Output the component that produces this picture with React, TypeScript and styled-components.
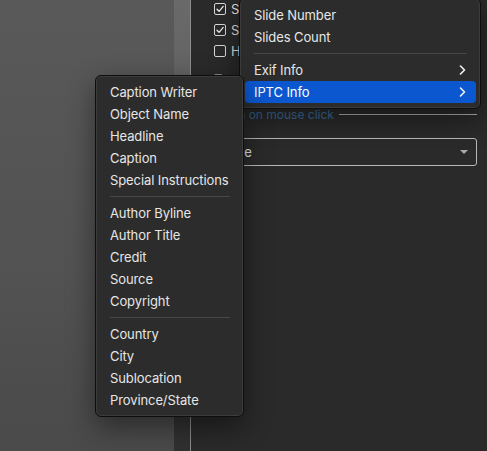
import styled, { createGlobalStyle } from "styled-components";

const GlobalStyle = createGlobalStyle`
  html, body {
    margin: 0;
    padding: 0;
    background: #2a2a2a;
    overflow: hidden;
  }
  body {
    font-family: Inter, "Liberation Sans", sans-serif;
    -webkit-font-smoothing: antialiased;
  }
`;

const Screen = styled.div`
  position: relative;
  display: flex;
  width: 487px;
  height: 451px;
  overflow: hidden;
`;

const Backdrop = styled.div`
  width: 174px;
  background: linear-gradient(180deg, #595959 0%, #525252 60%, #4a4a4a 100%);
`;

const Gutter = styled.div`
  width: 16px;
  background: linear-gradient(180deg, #6a6a6a 0%, #5a5a5a 35%, #3a3a3a 75%, #303030 100%);
`;

const Panel = styled.div`
  flex: 1;
  display: flex;
  flex-direction: column;
  background: #2a2a2a;
  border-left: 1px solid #8c8c8c;
  padding: 0 10px 0 23px;
  color: #dedede;
  font-size: 13px;
`;

const CheckRow = styled.div`
  display: flex;
  align-items: center;
  gap: 5px;
  height: 21px;
  &:first-child {
    margin-top: -2px;
  }
`;

const Box = styled.span`
  box-sizing: border-box;
  width: 12px;
  height: 12px;
  border: 1px solid #d8d8d8;
  border-radius: 2px;
  display: flex;
  align-items: center;
  justify-content: center;
`;

const FieldLabel = styled.div`
  margin-top: 8px;
  height: 20px;
  line-height: 20px;
  color: #8a8a8a;
`;

const LinkRow = styled.div`
  display: flex;
  align-items: center;
  gap: 5px;
  margin-top: 16px;
  margin-left: -5px;
  height: 18px;
`;

const LinkText = styled.span`
  color: #3d6c9b;
  font-size: 12px;
  white-space: nowrap;
`;

const Rule = styled.div`
  flex: 1;
  height: 1px;
  background: #b0b0b0;
`;

const Select = styled.div`
  box-sizing: border-box;
  margin-top: 15px;
  height: 28px;
  border: 1px solid #b8b8b8;
  border-radius: 3px;
  display: flex;
  align-items: center;
  justify-content: space-between;
  padding: 0 8px 0 4px;
  color: #e0e0e0;
`;

const Caret = styled.span`
  width: 0;
  height: 0;
  border-left: 4px solid transparent;
  border-right: 4px solid transparent;
  border-top: 4px solid #a8a8a8;
`;

const Menu = styled.div<{ $left: number; $top: number; $width: number }>`
  position: absolute;
  left: ${(p) => p.$left}px;
  top: ${(p) => p.$top}px;
  width: ${(p) => p.$width}px;
  box-sizing: border-box;
  padding: 5px 0;
  background: #2c2c2c;
  border: 1px solid #0e0e0e;
  border-radius: 6px;
  box-shadow: inset 0 0 0 1px #3c3c3c, 0 10px 28px rgba(0, 0, 0, 0.45);
  color: #e6e6e6;
  font-size: 13px;
  letter-spacing: -0.1px;
`;

const Item = styled.div<{ $active?: boolean }>`
  display: flex;
  align-items: center;
  justify-content: space-between;
  height: 22px;
  margin: 0 4px 0 5px;
  padding: 0 10px 0 9px;
  border-radius: 4px;
  background: ${(p) => (p.$active ? "#0b57d0" : "transparent")};
  color: ${(p) => (p.$active ? "#ffffff" : "#e6e6e6")};
  white-space: nowrap;
`;

const Separator = styled.div`
  height: 1px;
  margin: 5px 13px 5px 14px;
  background: #474747;
`;

const Chevron = () => (
  <svg width="7" height="10" viewBox="0 0 7 10">
    <path d="M1.5 1 L5.5 5 L1.5 9" fill="none" stroke="#f2f2f2" strokeWidth="1.6" strokeLinecap="round" strokeLinejoin="round" />
  </svg>
);

const Check = () => (
  <svg width="10" height="10" viewBox="0 0 10 10">
    <path d="M2 5.2 L4.1 7.4 L8.2 2.4" fill="none" stroke="#ececec" strokeWidth="1.3" strokeLinecap="round" strokeLinejoin="round" />
  </svg>
);

const checks = [
  { label: "Show Caption", on: true },
  { label: "Show Slide Number", on: true },
  { label: "Hide on mouse out", on: false },
];

const iptcGroups = [
  ["Caption Writer", "Object Name", "Headline", "Caption", "Special Instructions"],
  ["Author Byline", "Author Title", "Credit", "Source", "Copyright"],
  ["Country", "City", "Sublocation", "Province/State"],
];

export default function App() {
  return (
    <Screen>
      <GlobalStyle />
      <Backdrop />
      <Gutter />
      <Panel>
        {checks.map((c) => (
          <CheckRow key={c.label}>
            <Box>{c.on && <Check />}</Box>
            <span>{c.label}</span>
          </CheckRow>
        ))}
        <FieldLabel>Type</FieldLabel>
        <LinkRow>
          <LinkText>Action on mouse click</LinkText>
          <Rule />
        </LinkRow>
        <Select>
          <span>None</span>
          <Caret />
        </Select>
      </Panel>

      <Menu $left={239} $top={-2} $width={242}>
        <Item>Slide Number</Item>
        <Item>Slides Count</Item>
        <Separator />
        <Item>
          Exif Info
          <Chevron />
        </Item>
        <Item $active>
          IPTC Info
          <Chevron />
        </Item>
      </Menu>

      <Menu $left={95} $top={75} $width={149}>
        {iptcGroups.map((group, i) => (
          <div key={i}>
            {i > 0 && <Separator />}
            {group.map((name) => (
              <Item key={name}>{name}</Item>
            ))}
          </div>
        ))}
      </Menu>
    </Screen>
  );
}
